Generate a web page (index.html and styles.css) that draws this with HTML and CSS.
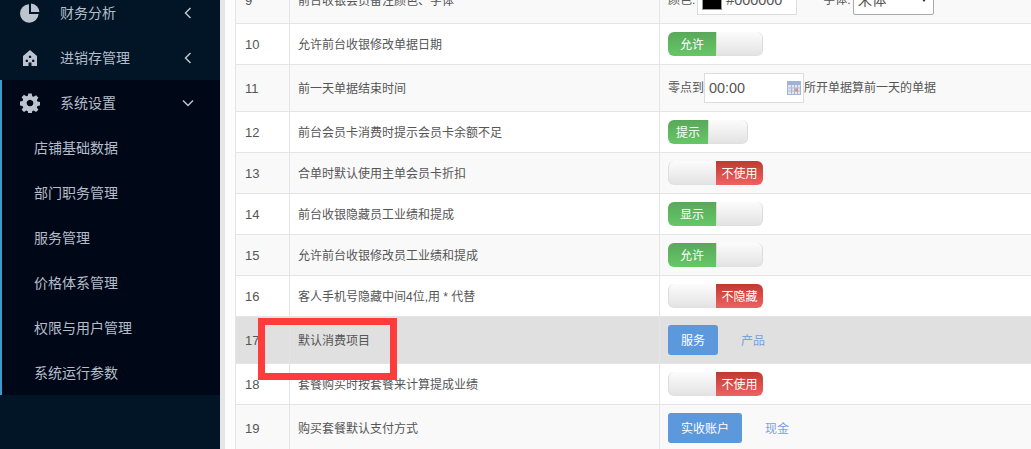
FILE: index.html
```html
<!DOCTYPE html>
<html lang="zh">
<head>
<meta charset="utf-8">
<title>系统运行参数</title>
<link rel="stylesheet" href="styles.css">
</head>
<body>
<div class="app">
  <aside class="sidebar">
    <div class="menu-item">
      <svg class="menu-icon" viewBox="0 0 20 20"><path d="M9 1.2V11h9.6A9.3 9.3 0 1 1 9 1.2Z"/><path d="M11 0.6A8.8 8.8 0 0 1 19.4 9H11Z"/></svg>
      <span class="menu-label">财务分析</span>
      <svg class="chev" viewBox="0 0 8 12"><path d="M6.5 1 1.5 6l5 5"/></svg>
    </div>
    <div class="menu-item">
      <svg class="menu-icon" viewBox="0 0 20 20"><path fill-rule="evenodd" d="M10 2 17 8v10H3V8ZM10 7.500a1.300 1.300 0 1 0 .01 0ZM6.800 11.500a1.300 1.300 0 1 0 .01 0ZM13.200 11.500a1.300 1.300 0 1 0 .01 0ZM8.500 14.500v3.500h3v-3.500Z"/></svg>
      <span class="menu-label">进销存管理</span>
      <svg class="chev" viewBox="0 0 8 12"><path d="M6.500 1 1.500 6l5 5"/></svg>
    </div>
    <div class="menu-group">
      <div class="menu-item">
        <svg class="menu-icon" viewBox="0 0 20 20"><path fill-rule="evenodd" d="M8.300 0.500h3.400l.5 2.700 1.500.6 2.300-1.500 2.400 2.400-1.600 2.300.7 1.500 2.700.5v3.400l-2.700.5-.7 1.500 1.600 2.300-2.400 2.400-2.300-1.500-1.500.6-.5 2.700H8.300l-.5-2.700-1.500-.6-2.300 1.500-2.400-2.400 1.600-2.300-.7-1.500-2.700-.5V8.500l2.700-.5.7-1.500-1.600-2.300 2.400-2.400 2.300 1.500 1.500-.6ZM10 6.700a3.300 3.300 0 1 0 .01 0Z"/></svg>
        <span class="menu-label">系统设置</span>
        <svg class="chev chev-down" viewBox="0 0 12 8"><path d="M1 1.500 6 6.500l5-5"/></svg>
      </div>
      <div class="sub-item">店铺基础数据</div>
      <div class="sub-item">部门职务管理</div>
      <div class="sub-item">服务管理</div>
      <div class="sub-item">价格体系管理</div>
      <div class="sub-item">权限与用户管理</div>
      <div class="sub-item">系统运行参数</div>
    </div>
  </aside>
  <div class="strip"></div>
  <main class="main">
    <div class="annotation"></div>
    <table class="params">
      <colgroup><col class="c-no"><col class="c-name"><col class="c-val"></colgroup>
      <tbody>
        <tr class="tall odd">
          <td>9</td>
          <td>前台收银会员备注颜色、字体</td>
          <td>
            <div class="cell-row">
              <span>颜色:</span>
              <div class="color-box"><span class="swatch"></span><span class="field-text">#000000</span></div>
              <span class="font-label">字体:</span>
              <div class="select-box"><span class="field-text">宋体</span><span class="caret"></span></div>
            </div>
          </td>
        </tr>
        <tr>
          <td>10</td><td>允许前台收银修改单据日期</td>
          <td><div class="switch"><span class="on w48">允许</span><span class="off w47"></span></div></td>
        </tr>
        <tr class="tall odd">
          <td>11</td><td>前一天单据结束时间</td>
          <td>
            <div class="cell-row">
              <span>零点到</span>
              <div class="time-box"><span class="field-text">00:00</span>
                <svg class="cal" viewBox="0 0 14 14"><rect x="0.500" y="0.500" width="13" height="13" fill="#dfe6f2" stroke="#a9b6d0"/><rect x="0.500" y="0.500" width="13" height="3.500" fill="#9fb2d6"/><path d="M1 7h12M1 10h12M4.500 4v9M7.500 4v9M10.500 4v9" stroke="#a9b9d8" fill="none"/><rect x="8" y="7.500" width="3" height="3" fill="#e58a7c"/></svg>
              </div>
              <span>所开单据算前一天的单据</span>
            </div>
          </td>
        </tr>
        <tr>
          <td>12</td><td>前台会员卡消费时提示会员卡余额不足</td>
          <td><div class="switch"><span class="on w40">提示</span><span class="off w40"></span></div></td>
        </tr>
        <tr class="odd">
          <td>13</td><td>合单时默认使用主单会员卡折扣</td>
          <td><div class="switch"><span class="off w48 left"></span><span class="red">不使用</span></div></td>
        </tr>
        <tr>
          <td>14</td><td>前台收银隐藏员工业绩和提成</td>
          <td><div class="switch"><span class="on w48">显示</span><span class="off w47"></span></div></td>
        </tr>
        <tr class="odd">
          <td>15</td><td>允许前台收银修改员工业绩和提成</td>
          <td><div class="switch"><span class="on w48">允许</span><span class="off w47"></span></div></td>
        </tr>
        <tr>
          <td>16</td><td>客人手机号隐藏中间4位,用 * 代替</td>
          <td><div class="switch"><span class="off w48 left"></span><span class="red">不隐藏</span></div></td>
        </tr>
        <tr class="tall hover">
          <td>17</td><td>默认消费项目</td>
          <td><div class="cell-row"><span class="btn w50">服务</span><span class="link l23">产品</span></div></td>
        </tr>
        <tr>
          <td>18</td><td>套餐购买时按套餐来计算提成业绩</td>
          <td><div class="switch"><span class="off w48 left"></span><span class="red">不使用</span></div></td>
        </tr>
        <tr class="tall odd">
          <td>19</td><td>购买套餐默认支付方式</td>
          <td><div class="cell-row"><span class="btn w74">实收账户</span><span class="link l23">现金</span></div></td>
        </tr>
      </tbody>
    </table>
  </main>
</div>
</body>
</html>
```
FILE: styles.css
```css
* { box-sizing: border-box; }
html, body { margin: 0; height: 449px; overflow: hidden; background: #fff; }
body { font-family: "Liberation Sans", "Noto Sans CJK SC", sans-serif; font-size: 12px; color: #555; }

.app { display: flex; height: 449px; overflow: hidden; }

.sidebar { width: 220px; flex: none; background: #011526; color: #b4bdc9; font-size: 14px; overflow: hidden; }
.menu-item { height: 45px; display: flex; align-items: center; padding-left: 20px; }
.sidebar > .menu-item:first-child { margin-top: -10px; }
.menu-icon { width: 20px; height: 20px; fill: #bcc4cf; flex: none; }
.menu-label { margin-left: 20px; flex: 1; padding-bottom: 2px; }
.chev { width: 8px; height: 12px; fill: none; stroke: #bcc4cf; stroke-width: 1.500; margin-right: 28px; flex: none; }
.chev-down { width: 12px; height: 8px; margin-right: 26px; }
.menu-group { background: #000818; border-left: 2px solid #3a9ccd; }
.menu-group .menu-item { padding-left: 18px; }
.sub-item { height: 45px; display: flex; align-items: center; padding-left: 32px; padding-bottom: 2px; }

.strip { width: 5px; flex: none; background: #e6e6e6; }

.main { flex: 1; position: relative; padding-left: 10px; background: #fdfdfd; overflow: hidden; }
.annotation { position: absolute; left: 33px; top: 318px; width: 139px; height: 62px; border: 7px solid #ff3b3b; z-index: 2; }

.params { border-collapse: collapse; table-layout: fixed; width: 850px; margin-top: -24px; background: #fff; }
.c-no { width: 54px; }
.c-name { width: 370px; }
.params td { height: 41px; padding: 2px 8px 0; border: 1px solid #e4e4e4; vertical-align: middle; line-height: 18px; }
.params td:last-child { padding-top: 0; }
.params td:first-child { padding-left: 9px; font-size: 13px; }
.tall td { height: 47px; }
tr.odd td { background: #f9f9f9; }
tr.hover td { background: #e0e0e0; }

.cell-row { display: flex; align-items: center; }
.field-text { font-size: 14.400px; color: #555; }

.color-box { width: 100px; height: 30px; margin-left: 2px; border: 1px solid #ddd; background: #fff; display: flex; align-items: center; padding-left: 4px; gap: 4px; }
.swatch { width: 20px; height: 20px; background: #000; border: 1px solid #999; }
.font-label { margin-left: 26px; }
.select-box { width: 81px; height: 30px; margin-left: 2px; border: 1px solid #aaa; border-radius: 2px; background: #fff; display: flex; align-items: center; justify-content: space-between; padding: 0 6px 0 4px; }
.caret { width: 0; height: 0; border-left: 3px solid transparent; border-right: 3px solid transparent; border-top: 4px solid #333; }

.time-box { width: 100px; height: 30px; border: 1px solid #ddd; background: #fff; display: flex; align-items: center; justify-content: space-between; padding: 0 2px 0 4px; }
.cal { width: 14px; height: 14px; }

.switch { display: flex; height: 24px; width: fit-content; color: #fff; line-height: 26px; text-align: center; }
.switch span { display: block; height: 24px; }
.on { background: linear-gradient(#59a85a, #66c766); border-radius: 6px 0 0 6px; }
.off { background: linear-gradient(#fcfcfc, #e3e3e3); border-radius: 0 6px 6px 0; border-right: 1px solid #ddd; border-left: 1px solid #ddd; border-bottom: 1px solid #e0e0e0; }
.off.left { border-radius: 6px 0 0 6px; border-right: 0; }
.red { width: 47px; background: linear-gradient(#bf3a30, #ef6262); border-radius: 0 6px 6px 0; }
.w40 { width: 40px; }
.w47 { width: 47px; }
.w48 { width: 48px; }

.btn { height: 30px; line-height: 32px; text-align: center; background: #5b98dc; color: #fff; border-radius: 3px; }
.w50 { width: 50px; }
.w74 { width: 74px; }
.link { color: #7c9fdd; padding-top: 2px; }
.l23 { margin-left: 23px; }
```
